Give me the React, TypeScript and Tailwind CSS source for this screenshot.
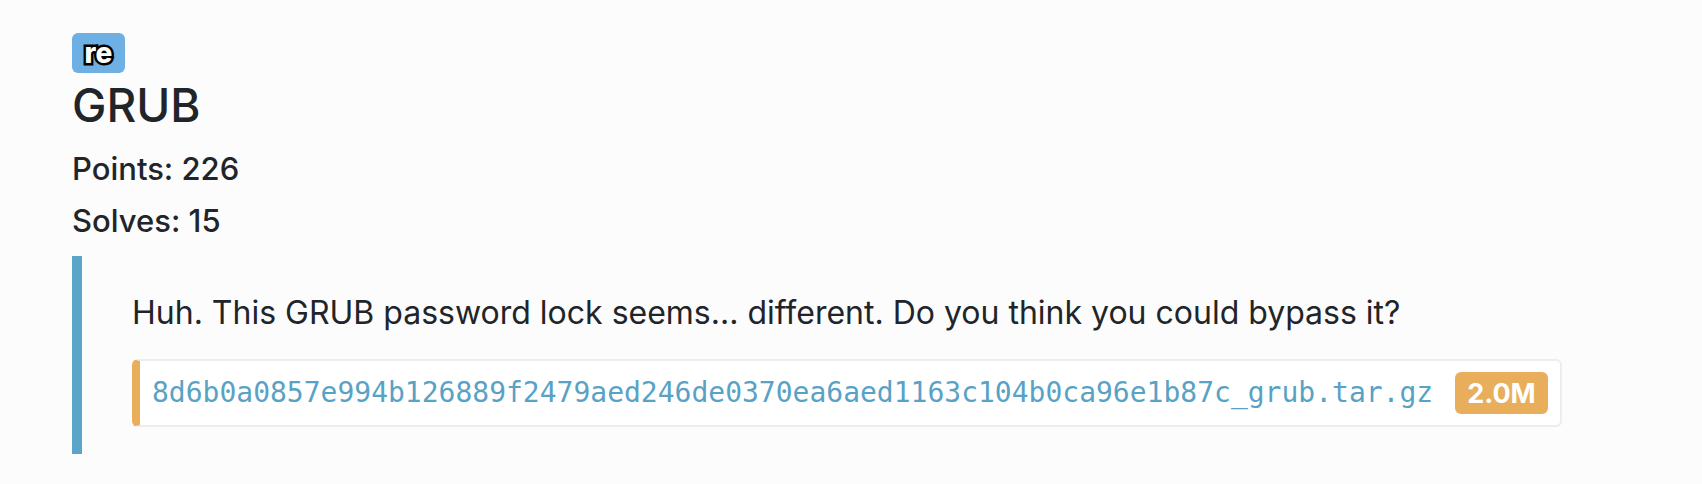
import React from 'react';

const FILE_NAME = '8d6b0a0857e994b126889f2479aed246de0370ea6aed1163c104b0ca96e1b87c_grub.tar.gz';

export default function App() {
  return (
    <div className="min-h-screen bg-[#fcfcfc] pl-[72px] pt-[33px] text-[#212529] font-['Inter',sans-serif]">
      {/* category tag */}
      <div className="flex h-[40px] w-[53px] items-center justify-center rounded-[6px] bg-[#6eb0e4]">
        <span className="text-[28px] font-extrabold leading-none text-white [-webkit-text-stroke:5px_#000] [paint-order:stroke_fill]">
          re
        </span>
      </div>

      <h4 className="mt-[9px] text-[46px] font-medium leading-none">GRUB</h4>
      <p className="mt-[25px] text-[31px] font-medium leading-none">Points: 226</p>
      <p className="mt-[21px] text-[31px] font-medium leading-none">Solves: 15</p>

      <blockquote className="mt-[20px] border-l-[10px] border-[#5aa5c8] pl-[50px] pt-[41px] pb-[27px]">
        <p className="text-[32px] leading-none">
          Huh. This GRUB password lock seems... different. Do you think you could bypass it?
        </p>
        <div className="mt-[30px] inline-flex h-[68px] items-center gap-[22px] rounded-[6px] border-2 border-l-[8px] border-[#ededed] border-l-[#e8ae5c] bg-white pl-[12px] pr-[12px]">
          <a href="#" className="font-['DejaVu_Sans_Mono',monospace] text-[28px] leading-none text-[#58a2c6]">
            {FILE_NAME}
          </a>
          <span className="flex h-[42px] items-center rounded-[6px] bg-[#e8ae5c] px-[12px] text-[27px] font-bold leading-none text-white">
            2.0M
          </span>
        </div>
      </blockquote>
    </div>
  );
}
